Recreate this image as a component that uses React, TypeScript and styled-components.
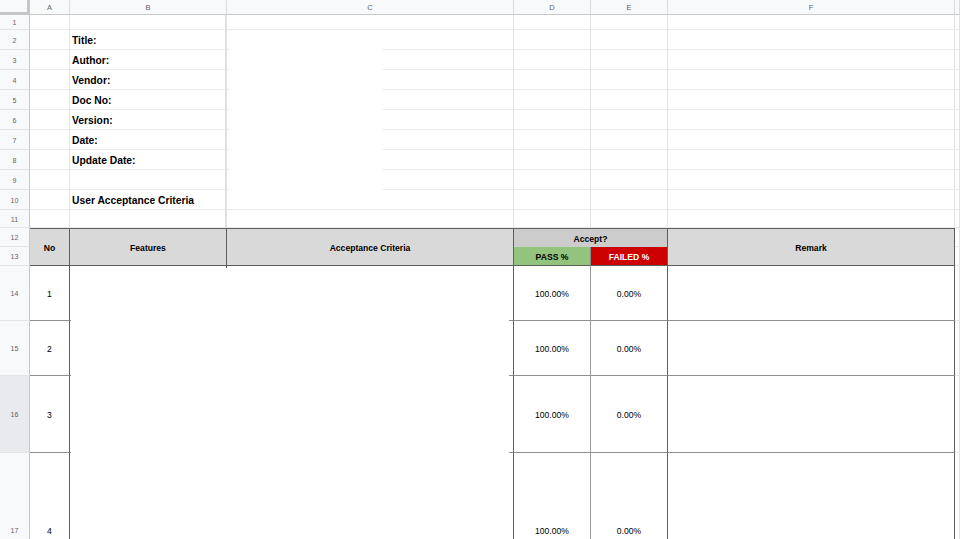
import React from 'react';
import styled, { createGlobalStyle, css } from 'styled-components';

const GlobalStyle = createGlobalStyle`
  html, body {
    margin: 0;
    padding: 0;
    background: #fff;
  }
  body {
    font-family: "Liberation Sans", Arial, sans-serif;
  }
`;

interface Place {
  $c: number;
  $r: number;
  $cs?: number;
  $rs?: number;
}

const place = css<Place>`
  grid-column: ${({ $c, $cs }) => `${$c} / span ${$cs ?? 1}`};
  grid-row: ${({ $r, $rs }) => `${$r} / span ${$rs ?? 1}`};
`;

const Sheet = styled.div`
  position: relative;
  display: grid;
  grid-template-columns: 30px 40px 157px 287px 77px 77px 287px 1fr;
  grid-template-rows: 15px 15px repeat(9, 20px) 18px 19px 19px 55px 55px 77px 155px;
  width: 960px;
  height: 539px;
  overflow: hidden;
  background: #fff;
`;

const Corner = styled.div`
  grid-column: 1;
  grid-row: 1;
  box-sizing: border-box;
  background: #f8f9fa;
  border-right: 3px solid #c4c7c5;
  border-bottom: 3px solid #c4c7c5;
`;

const ColHeader = styled.div<Place>`
  ${place};
  box-sizing: border-box;
  display: flex;
  align-items: center;
  justify-content: center;
  background: #f8f9fa;
  border-right: 1px solid #dadce0;
  border-bottom: 1px solid #c7c7c7;
  color: #5f6368;
  font-size: 7.5px;
`;

const RowHeader = styled.div<Place & { $active?: boolean }>`
  ${place};
  box-sizing: border-box;
  display: flex;
  align-items: center;
  justify-content: center;
  padding-top: 1px;
  background: ${({ $active }) => ($active ? '#e8eaed' : '#f8f9fa')};
  border-right: 1px solid #c7c7c7;
  border-bottom: 1px solid #e1e3e6;
  color: #5f6368;
  font-size: 7px;
`;

const GridCell = styled.div<Place & { $wide?: boolean }>`
  ${place};
  box-sizing: border-box;
  display: flex;
  align-items: center;
  padding: 2px 0 0 2px;
  border-right: ${({ $wide }) => ($wide ? '2px solid #e0e0e0' : '1px solid #e2e3e3')};
  border-bottom: 1px solid #e9eaea;
  color: #000;
  font-size: 10.3px;
  font-weight: bold;
  white-space: nowrap;
`;

const HeadCell = styled.div<Place & { $bg?: string; $color?: string; $top?: boolean }>`
  ${place};
  box-sizing: border-box;
  display: flex;
  align-items: center;
  justify-content: center;
  padding-top: 1px;
  background: ${({ $bg }) => $bg ?? '#d9d9d9'};
  color: ${({ $color }) => $color ?? '#000'};
  border-right: 1px solid #5f5f5f;
  border-bottom: 1px solid #5f5f5f;
  border-top: ${({ $top }) => ($top ? '1px solid #5f5f5f' : 'none')};
  font-size: 8.6px;
  font-weight: bold;
`;

const DataCell = styled.div<Place & { $edge?: string }>`
  ${place};
  box-sizing: border-box;
  display: flex;
  align-items: center;
  justify-content: center;
  padding-top: 1px;
  border-right: 1px solid ${({ $edge }) => $edge ?? '#5f5f5f'};
  border-bottom: 1px solid #8f8f8f;
  color: #000;
  font-size: 8.6px;
`;

const Mask = styled.div<{ $x: number; $y: number; $w: number; $h: number }>`
  position: absolute;
  left: ${({ $x }) => $x}px;
  top: ${({ $y }) => $y}px;
  width: ${({ $w }) => $w}px;
  height: ${({ $h }) => $h}px;
  background: #fff;
`;

const LETTERS = ['A', 'B', 'C', 'D', 'E', 'F', ''];

const LABELS: Record<number, string> = {
  2: 'Title:',
  3: 'Author:',
  4: 'Vendor:',
  5: 'Doc No:',
  6: 'Version:',
  7: 'Date:',
  8: 'Update Date:',
  10: 'User Acceptance Criteria',
};

const RESULTS = [
  { row: 14, no: '1', pass: '100.00%', fail: '0.00%' },
  { row: 15, no: '2', pass: '100.00%', fail: '0.00%' },
  { row: 16, no: '3', pass: '100.00%', fail: '0.00%' },
  { row: 17, no: '4', pass: '100.00%', fail: '0.00%' },
];

const App: React.FC = () => {
  const gr = (row: number) => row + 1;

  return (
    <>
      <GlobalStyle />
      <Sheet>
        <Corner />
        {LETTERS.map((l, i) => (
          <ColHeader key={i} $c={i + 2} $r={1}>
            {l}
          </ColHeader>
        ))}

        {Array.from({ length: 17 }, (_, i) => (
          <RowHeader key={i} $c={1} $r={gr(i + 1)} $active={i + 1 === 16}>
            {i + 1}
          </RowHeader>
        ))}

        {/* document info block, rows 1-11 */}
        {Array.from({ length: 11 }, (_, i) => i + 1).map((row) =>
          LETTERS.map((_, ci) => (
            <GridCell key={`${row}-${ci}`} $c={ci + 2} $r={gr(row)} $wide={ci === 1}>
              {ci === 1 ? LABELS[row] : null}
            </GridCell>
          ))
        )}

        {/* table header */}
        <HeadCell $c={2} $r={gr(12)} $rs={2} $top>No</HeadCell>
        <HeadCell $c={3} $r={gr(12)} $rs={2} $top>Features</HeadCell>
        <HeadCell $c={4} $r={gr(12)} $rs={2} $top>Acceptance Criteria</HeadCell>
        <HeadCell $c={5} $r={gr(12)} $cs={2} $top $bg="#cccccc" style={{ borderBottom: 'none' }}>
          Accept?
        </HeadCell>
        <HeadCell $c={5} $r={gr(13)} $bg="#93c47d" style={{ borderRightColor: '#8a8a8a' }}>
          PASS %
        </HeadCell>
        <HeadCell $c={6} $r={gr(13)} $bg="#cc0000" $color="#fff">
          FAILED %
        </HeadCell>
        <HeadCell $c={7} $r={gr(12)} $rs={2} $top>Remark</HeadCell>
        <GridCell $c={8} $r={gr(12)} />
        <GridCell $c={8} $r={gr(13)} />

        {/* table body */}
        {RESULTS.map((r) => (
          <React.Fragment key={r.row}>
            <DataCell $c={2} $r={gr(r.row)}>{r.no}</DataCell>
            <DataCell $c={3} $r={gr(r.row)} />
            <DataCell $c={4} $r={gr(r.row)} />
            <DataCell $c={5} $r={gr(r.row)} $edge="#9a9a9a">{r.pass}</DataCell>
            <DataCell $c={6} $r={gr(r.row)}>{r.fail}</DataCell>
            <DataCell $c={7} $r={gr(r.row)} />
            <GridCell $c={8} $r={gr(r.row)} />
          </React.Fragment>
        ))}

        {/* blanked-out content */}
        <Mask $x={229} $y={31} $w={154} $h={176} />
        <Mask $x={71} $y={268} $w={438} $h={271} />
      </Sheet>
    </>
  );
};

export default App;
